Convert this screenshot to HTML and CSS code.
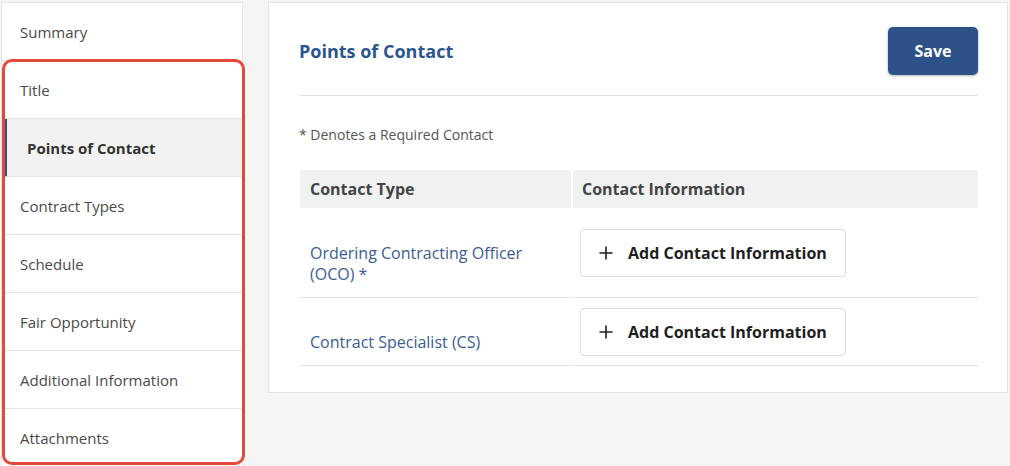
FILE: index.html
```html
<!DOCTYPE html>
<html>
<head>
<meta charset="utf-8">
<link rel="stylesheet" href="styles.css">
</head>
<body>
<div class="page">
  <div class="side-wrap">
    <nav class="sidebar">
      <div class="nav-item">Summary</div>
      <div class="nav-item">Title</div>
      <div class="nav-item active">Points of Contact</div>
      <div class="nav-item">Contract Types</div>
      <div class="nav-item">Schedule</div>
      <div class="nav-item">Fair Opportunity</div>
      <div class="nav-item">Additional Information</div>
      <div class="nav-item last">Attachments</div>
    </nav>
    <div class="highlight"></div>
  </div>
  <main class="panel">
    <div class="panel-head">
      <h1 class="title">Points of Contact</h1>
      <button class="save">Save</button>
    </div>
    <p class="note">* Denotes a Required Contact</p>
    <table class="contacts">
      <thead>
        <tr><th class="col1">Contact Type</th><th>Contact Information</th></tr>
      </thead>
      <tbody>
        <tr class="row-tall">
          <td class="type"><a class="link">Ordering Contracting Officer (OCO) *</a></td>
          <td class="info"><button class="add"><svg class="plus" viewBox="0 0 14 14" width="14" height="14"><path d="M7 0.5V13.5M0.5 7H13.5" stroke="#1f1f1f" stroke-width="1.6" fill="none"/></svg><span>Add Contact Information</span></button></td>
        </tr>
        <tr class="row-short">
          <td class="type"><a class="link">Contract Specialist (CS)</a></td>
          <td class="info"><button class="add"><svg class="plus" viewBox="0 0 14 14" width="14" height="14"><path d="M7 0.5V13.5M0.5 7H13.5" stroke="#1f1f1f" stroke-width="1.6" fill="none"/></svg><span>Add Contact Information</span></button></td>
        </tr>
      </tbody>
    </table>
  </main>
</div>
</body>
</html>
```
FILE: styles.css
```css
* { box-sizing: border-box; }
html, body { margin: 0; padding: 0; }
body {
  background: #f5f5f5;
  font-family: "Open Sans", "Noto Sans", sans-serif;
  color: #444;
  width: 1010px;
  height: 466px;
  overflow: hidden;
}
.page {
  display: flex;
  align-items: flex-start;
  padding: 2px 2px 0 1px;
  gap: 25px;
}
.side-wrap {
  position: relative;
  width: 242px;
  flex: none;
}
.sidebar {
  background: #fff;
  border: 1px solid #e6e6e6;
  border-bottom: none;
  display: flex;
  flex-direction: column;
}
.nav-item {
  height: 58px;
  display: flex;
  align-items: center;
  padding-left: 18px;
  font-size: 15px;
  color: #4a4a4a;
  border-bottom: 1px solid #e4e4e4;
}
.nav-item.last { border-bottom: none; }
.nav-item.active {
  background: #f2f2f2;
  font-weight: 700;
  color: #333;
  padding-left: 20px;
  border-left: 4px solid #2c5288;
  margin-left: 1px;
}
.highlight {
  position: absolute;
  left: 1px;
  top: 57px;
  width: 243px;
  height: 406px;
  border: 3px solid #e4493b;
  border-radius: 10px;
  pointer-events: none;
}
.panel {
  flex: 1;
  background: #fff;
  border: 1px solid #e3e3e3;
  padding: 24px 29px 26px 30px;
}
.panel-head {
  display: flex;
  justify-content: space-between;
  align-items: center;
  padding-bottom: 20px;
  border-bottom: 1px solid #e3e3e3;
}
.title {
  margin: 0;
  font-size: 18px;
  font-weight: 700;
  color: #2b5590;
}
.save {
  width: 90px;
  height: 48px;
  background: #2c5288;
  color: #fff;
  border: none;
  border-radius: 5px;
  font-family: inherit;
  font-size: 16px;
  font-weight: 700;
  box-shadow: 0 1px 3px rgba(0,0,0,0.3);
}
.note {
  margin: 29px 0 25px;
  font-size: 14px;
  line-height: 20px;
  color: #555;
}
.contacts {
  width: calc(100% + 3px);
  margin-left: -1px;
  border-collapse: separate;
  border-spacing: 2px 0;
}
.contacts th {
  background: #f0f1f1;
  height: 38px;
  text-align: left;
  font-size: 16px;
  font-weight: 700;
  color: #444;
  padding: 0 9px;
}
.contacts th.col1 { width: 271px; padding-left: 10px; }
.contacts td {
  border-bottom: 1px solid #e2e2e2;
  padding: 0;
}
.row-tall td { height: 90px; }
.row-short td { height: 68px; }
.contacts td.type {
  vertical-align: bottom;
  padding: 0 10px 12px;
  font-size: 16px;
  line-height: 21px;
}
.link { color: #3a5d95; }
.contacts td.info {
  vertical-align: middle;
  padding: 1px 7px 0;
}
.add {
  display: inline-flex;
  align-items: center;
  gap: 15px;
  width: 266px;
  height: 48px;
  padding: 0 0 0 18px;
  background: #fff;
  border: 1px solid #dcdcdc;
  border-radius: 4px;
  font-family: inherit;
  font-size: 16px;
  font-weight: 700;
  color: #1f1f1f;
}
.plus { flex: none; }
```
